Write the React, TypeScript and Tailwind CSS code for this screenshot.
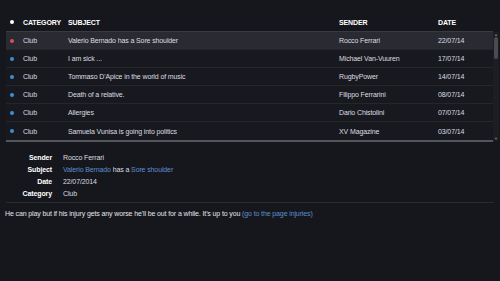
import React from "react";

const rows = [
  { dot: "bg-[#d4534c]", cat: "Club", subject: "Valerio Bernado has a Sore shoulder", sender: "Rocco Ferrari", date: "22/07/14", active: true },
  { dot: "bg-[#3f8fd6]", cat: "Club", subject: "I am sick ...", sender: "Michael Van-Vuuren", date: "17/07/14" },
  { dot: "bg-[#3f8fd6]", cat: "Club", subject: "Tommaso D'Apice in the world of music", sender: "RugbyPower", date: "14/07/14" },
  { dot: "bg-[#3f8fd6]", cat: "Club", subject: "Death of a relative.", sender: "Filippo Ferrarini", date: "08/07/14" },
  { dot: "bg-[#3f8fd6]", cat: "Club", subject: "Allergies", sender: "Dario Chistolini", date: "07/07/14" },
  { dot: "bg-[#3f8fd6]", cat: "Club", subject: "Samuela Vunisa is going into politics", sender: "XV Magazine", date: "03/07/14" },
];

export default function App() {
  return (
    <div
      className="w-[500px] h-[281px] overflow-hidden bg-[#16171d] text-[#dcdde0] text-[7px] leading-none tracking-[-0.12px] antialiased"
      style={{ fontFamily: '"Liberation Sans", Arial, sans-serif' }}
    >
      <div className="pt-[13px] flex">
        <div className="ml-[6px] w-[487px]">
          {/* header */}
          <div className="flex items-center h-[18px] font-bold text-white">
            <div className="w-[17px] flex">
              <div className="ml-[4px] w-[4px] h-[4px] rounded-full bg-white" />
            </div>
            <div className="w-[45px]">CATEGORY</div>
            <div className="w-[271px]">SUBJECT</div>
            <div className="w-[99px]">SENDER</div>
            <div>DATE</div>
          </div>
          <div className="border-t border-[#3a3b42] border-b-2 border-b-[#55565d]">
            {rows.map((r, i) => (
              <div
                key={i}
                className={`flex items-center h-[18px] ${i < rows.length - 1 ? "border-b border-[#25262d]" : ""} ${r.active ? "bg-[#2a2b32]" : "bg-[#18191f]"}`}
              >
                <div className="w-[17px] flex">
                  <div className={`ml-[4px] w-[4px] h-[4px] rounded-full ${r.dot}`} />
                </div>
                <div className="w-[45px]">{r.cat}</div>
                <div className="w-[271px]">{r.subject}</div>
                <div className="w-[99px]">{r.sender}</div>
                <div>{r.date}</div>
              </div>
            ))}
          </div>
        </div>
        {/* scrollbar */}
        <div className="mt-[19px] h-[109px] w-[6px] flex flex-col items-center bg-[#1d1e24]">
          <div className="text-[4px] text-[#777] leading-[5px]">▲</div>
          <div className="w-[4px] h-[22px] rounded-[2px] bg-[#4a4b53]" />
          <div className="flex-1" />
          <div className="text-[4px] text-[#777] leading-[5px]">▼</div>
        </div>
      </div>

      {/* details */}
      <div className="mt-[9px] flex flex-col">
        {[
          ["Sender", <span>Rocco Ferrari</span>],
          [
            "Subject",
            <span>
              <span className="text-[#5b8fcf]">Valerio Bernado</span> has a{" "}
              <span className="text-[#5b8fcf]">Sore shoulder</span>
            </span>,
          ],
          ["Date", <span>22/07/2014</span>],
          ["Category", <span>Club</span>],
        ].map(([label, value], i) => (
          <div key={i} className="flex items-center h-[12px]">
            <div className="w-[52px] text-right font-bold text-white">{label as string}</div>
            <div className="ml-[11px]">{value}</div>
          </div>
        ))}
      </div>
      <div className="mt-[3px] mx-[6px] border-t border-[#2a2b31]" />
      <div className="mt-[7px] ml-[5px] text-[#e4e5e8]">
        He can play but if his injury gets any worse he'll be out for a while. It's up to you{" "}
        <span className="text-[#5b8fcf]">(go to the page injuries)</span>
      </div>
    </div>
  );
}
